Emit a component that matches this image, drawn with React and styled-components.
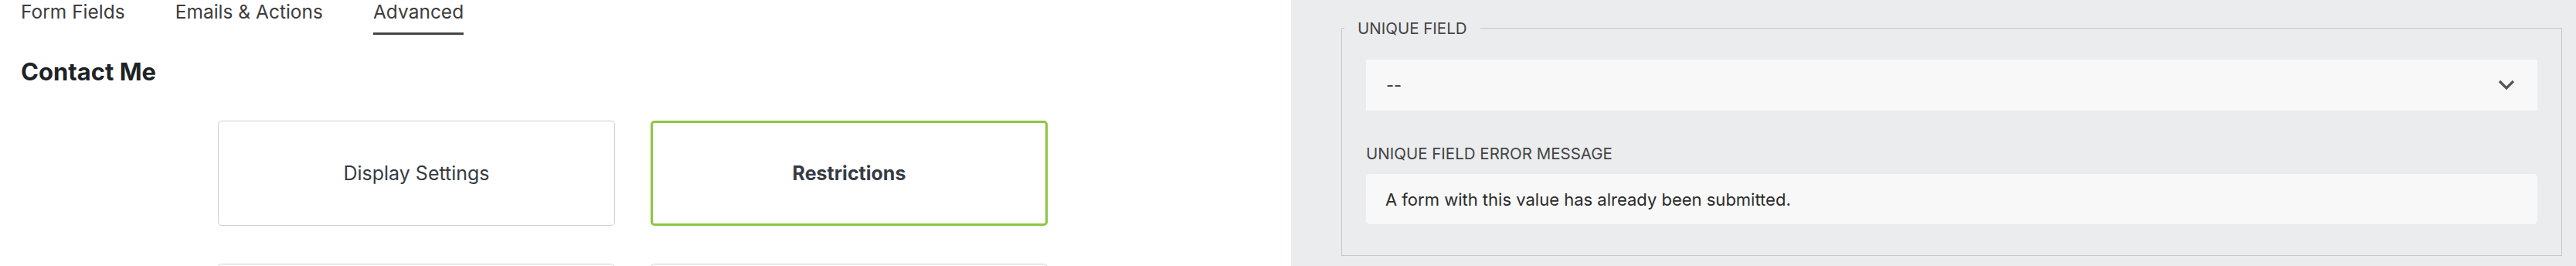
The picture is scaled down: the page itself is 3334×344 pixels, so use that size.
import React from 'react'
import styled, { createGlobalStyle } from 'styled-components'

const GlobalStyle = createGlobalStyle`
    html, body {
        margin: 0;
        padding: 0;
        background: #ffffff;
    }
    body {
        font-family: Inter, "Noto Sans", "Liberation Sans", sans-serif;
    }
`;

const Page = styled.div`
    display: grid;
    grid-template-columns: 1671px 1fr;
    height: 344px;
    overflow: hidden;
`;

const Builder = styled.div`
    padding-left: 27px;
    background: #ffffff;
`;

const Tabs = styled.nav`
    display: flex;
    gap: 65px;
    padding-top: 1px;
`;

const Tab = styled.div`
    font-size: 24.5px;
    line-height: 28px;
    color: #3d3d3d;
    padding-bottom: 13px;
    border-bottom: 3px solid ${props => (props.active ? '#454545' : 'transparent')};
`;

const Title = styled.h1`
    margin: 28px 0 0;
    font-size: 31px;
    line-height: 40px;
    font-weight: 700;
    color: #1e2226;
`;

const SettingsGrid = styled.div`
    display: grid;
    grid-template-columns: repeat(2, 514px);
    grid-auto-rows: 136px;
    column-gap: 46px;
    row-gap: 49px;
    margin: 43px 0 0 255px;
`;

const SettingCard = styled.div`
    display: flex;
    align-items: center;
    justify-content: center;
    box-sizing: border-box;
    border: ${props => (props.active ? '3px solid #8dc641' : '1px solid #d0d0d0')};
    border-radius: 5px;
    font-size: 25px;
    font-weight: ${props => (props.active ? 700 : 400)};
    color: #363b43;
    background: #ffffff;
`;

const Drawer = styled.aside`
    background: #ebecee;
    padding: 24px 18px 0 65px;
`;

const Group = styled.fieldset`
    margin: 0;
    padding: 0;
    min-width: 0;
    border: 1px solid #c6c7c9;
`;

const Legend = styled.legend`
    margin-left: 3px;
    padding: 0 17px;
    font-size: 20.5px;
    line-height: 25px;
    color: #444444;
`;

const GroupBody = styled.div`
    padding: 28px 31px 40px;
`;

const SelectBox = styled.div`
    display: flex;
    align-items: center;
    justify-content: space-between;
    height: 66px;
    padding: 0 29px 0 26px;
    background: #f8f8f8;
    font-size: 22px;
    color: #333333;
`;

const Label = styled.label`
    display: block;
    margin-top: 43px;
    font-size: 20.5px;
    line-height: 25px;
    color: #444444;
`;

const TextInput = styled.input`
    display: block;
    box-sizing: border-box;
    width: 100%;
    height: 65px;
    margin-top: 14px;
    padding: 0 25px;
    border: none;
    border-radius: 5px;
    background: #f8f8f8;
    font-family: inherit;
    font-size: 22px;
    color: #2b2b2b;
    outline: none;
`;

const Chevron = () => (
    <svg width="22" height="14" viewBox="0 0 22 14" aria-hidden="true">
        <polyline points="2,2 11,11 20,2" fill="none" stroke="#555555" strokeWidth="3.2" />
    </svg>
)

const tabs = ['Form Fields', 'Emails & Actions', 'Advanced']
// the lower row of cards runs past the bottom edge, only their tops show
const cards = [
    { id: 'display', label: 'Display Settings' },
    { id: 'restrictions', label: 'Restrictions', active: true },
    { id: 'calculations', label: '' },
    { id: 'save', label: '' },
]

const App = () => {
    return (
        <Page>
            <GlobalStyle />
            <Builder>
                <Tabs>
                    {tabs.map(t => (
                        <Tab key={t} active={t === 'Advanced'}>{t}</Tab>
                    ))}
                </Tabs>
                <Title>Contact Me</Title>
                <SettingsGrid>
                    {cards.map(c => (
                        <SettingCard key={c.id} active={c.active}>{c.label}</SettingCard>
                    ))}
                </SettingsGrid>
            </Builder>
            <Drawer>
                <Group>
                    <Legend>UNIQUE FIELD</Legend>
                    <GroupBody>
                        <SelectBox>
                            <span>--</span>
                            <Chevron />
                        </SelectBox>
                        <Label htmlFor="unique-msg">UNIQUE FIELD ERROR MESSAGE</Label>
                        <TextInput
                            id="unique-msg"
                            readOnly
                            defaultValue="A form with this value has already been submitted."
                        />
                    </GroupBody>
                </Group>
            </Drawer>
        </Page>
    )
}

export default App
